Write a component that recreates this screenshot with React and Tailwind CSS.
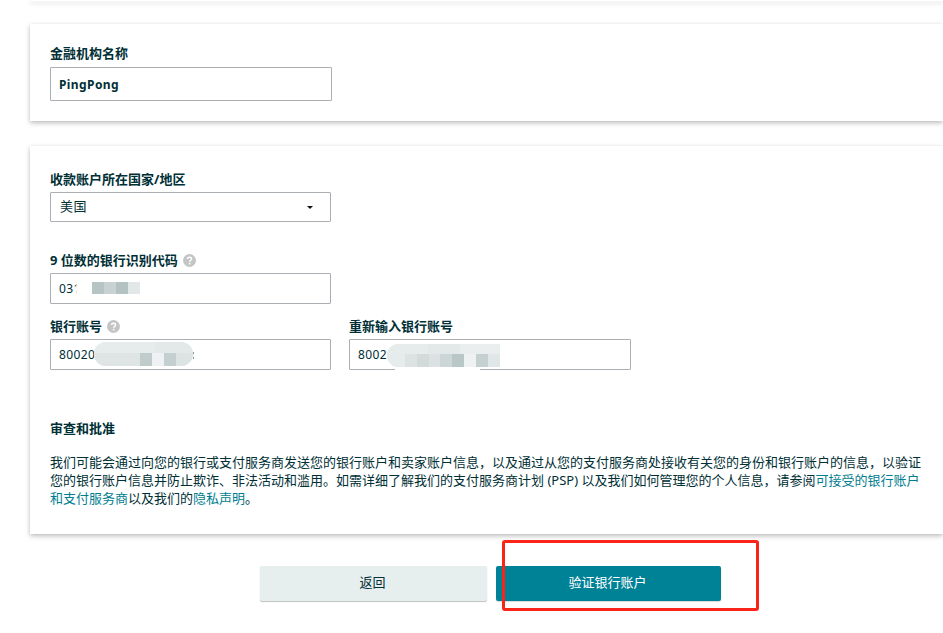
function Help() {
  return (
    <svg width="13" height="13" viewBox="0 0 14 14" className="shrink-0">
      <circle cx="7" cy="7" r="7" fill="#c4c6c6" />
      <path d="M4.9 5.5c0-1.3 1-2 2.2-2s2.1.7 2.1 1.8c0 1.6-2 1.6-2 3" fill="none" stroke="#fff" strokeWidth="1.6" />
      <rect x="6.3" y="9.5" width="1.7" height="1.7" fill="#fff" />
    </svg>
  );
}
function Label({ children, help, className = "" }) {
  return (
    <div className={"flex h-[18px] items-center gap-[5px] text-[13px] font-bold leading-[18px] text-[#002f36] " + className}>
      <span>{children}</span>
      {help && <Help />}
    </div>
  );
}
function Row({ cells, className = "" }) {
  return (
    <div className={"flex " + className}>
      {cells.map((c, i) => (
        <div key={i} className="h-full" style={{ width: c[0], background: c[1] }} />
      ))}
    </div>
  );
}
function Field({ value, className = "", children }) {
  return (
    <div className={"relative flex items-center rounded-[1px] border border-[#a9afb3] bg-white text-[12px] tracking-[0.4px] text-[#002f36] " + className}>
      {value}
      {children}
    </div>
  );
}
export default function App() {
  return (
    <div className="relative h-[633px] w-[943px] overflow-hidden bg-white font-['Noto_Sans','Noto_Sans_CJK_SC',sans-serif]">
      <div className="ml-[30px] h-px bg-white shadow-[0_2px_5px_rgba(0,0,0,0.28)]" />
      <section className="ml-[30px] mt-[23px] h-[97px] bg-white px-5 pt-[20px] shadow-[0_2px_5px_rgba(0,0,0,0.26),0_0_3px_rgba(0,0,0,0.03)]">
        <Label>金融机构名称</Label>
        <Field className="mt-[5px] h-[34px] w-[282px] pl-[8px] pt-px font-bold tracking-[0.2px]" value="PingPong" />
      </section>
      <section className="ml-[30px] mt-[25px] h-[388px] bg-white px-5 pt-[24px] shadow-[0_2px_5px_rgba(0,0,0,0.26),0_0_3px_rgba(0,0,0,0.03)]">
        <Label>收款账户所在国家/地区</Label>
        <Field className="mt-[4px] h-[30px] w-[281px] justify-between pl-[9px] pr-[17px] text-[13px]" value="美国">
          <svg width="6" height="3" viewBox="0 0 6 3"><path d="M0 0h6L3 3z" fill="#111" /></svg>
        </Field>
        <Label help className="mt-[29px]">9 位数的银行识别代码</Label>
        <Field className="mt-[4px] h-[31px] w-[281px] pl-[8px]" value="031">
          <div className="absolute left-[25px] top-[1px] flex h-[26px] w-[67px] items-center rounded-[13px] bg-white pl-[16px]">
            <Row className="h-[12px]" cells={[[12,"#b6c4c4"],[12,"#c8d2d2"],[12,"#b4c2c2"],[12,"#e2e8e8"]]} />
          </div>
        </Field>
        <div className="mt-[13px] flex gap-[18px]">
          <div className="w-[281px]">
            <Label help>银行账号</Label>
            <Field className="mt-[4px] h-[31px] pl-[8px]" value="80020">
              <div className="absolute left-[43px] top-[2px] h-[24px] w-[99px] overflow-hidden rounded-[12px] bg-[#e6ebeb]">
                <Row className="h-[11px]" cells={[[61,"#e6ebeb"],[38,"#e3e8e8"]]} />
                <Row className="h-[13px]" cells={[[46,"#dfe5e5"],[12,"#c0cccc"],[12,"#eef2f2"],[12,"#c4d0d0"],[17,"#dce3e3"]]} />
              </div>
              <div className="absolute left-[142px] top-[12px] h-[2px] w-px bg-[#8a9a9c]" />
              <div className="absolute left-[142px] top-[17px] h-[2px] w-px bg-[#8a9a9c]" />
            </Field>
          </div>
          <div className="w-[282px]">
            <Label>重新输入银行账号</Label>
            <Field className="mt-[4px] h-[31px] pl-[8px]" value="8002">
              <div className="absolute bottom-[-1px] left-[45px] h-[2px] w-[85px] bg-white" />
              <div className="absolute left-[37px] top-[4px] h-[23px] w-[113px] overflow-hidden rounded-l-[12px] bg-[#e6ebeb]">
                <Row className="h-[10px]" cells={[[41,"#e6ebeb"],[32,"#e3e8e8"],[40,"#eaeeee"]]} />
                <Row className="h-[13px]" cells={[[18,"#e6ebeb"],[12,"#dde3e3"],[12,"#d2dada"],[11,"#dce2e2"],[12,"#ccd6d6"],[12,"#bac7c7"],[12,"#eef2f2"],[12,"#c5d0d0"],[12,"#e1e7e7"]]} />
              </div>
            </Field>
          </div>
        </div>
        <h3 className="mt-[49px] h-[18px] text-[13px] font-bold leading-[18px] text-[#002f36]">审查和批准</h3>
        <p className="mt-[16px] w-[873px] text-[13px] leading-[18px] text-[#002f36]">
          我们可能会通过向您的银行或支付服务商发送您的银行账户和卖家账户信息，以及通过从您的支付服务商处接收有关您的身份和银行账户的信息，以验证您的银行账户信息并防止欺诈、非法活动和滥用。如需详细了解我们的支付服务商计划 (PSP) 以及我们如何管理您的个人信息，请参阅<span className="text-[#007d8f]">可接受的银行账户和支付服务商</span>以及我们的<span className="text-[#007d8f]">隐私声明</span>。
        </p>
      </section>
      <div className="ml-[260px] mt-[32px] flex gap-[9px]">
        <button className="h-[35px] w-[227px] rounded-[2px] bg-[#e7eeee] pb-px pr-[2px] text-[13px] text-[#002f36] shadow-[0_1px_1px_rgba(0,0,0,0.25)]">返回</button>
        <button className="h-[35px] w-[225px] rounded-[2px] bg-[#008296] pb-px pr-[2px] text-[13px] text-white shadow-[0_1px_1px_rgba(0,0,0,0.15)]">验证银行账户</button>
      </div>
      <div className="absolute left-[502px] top-[540px] h-[71px] w-[257px] rounded-[3px] border-[3px] border-[#fb2418]" />
    </div>
  );
}
